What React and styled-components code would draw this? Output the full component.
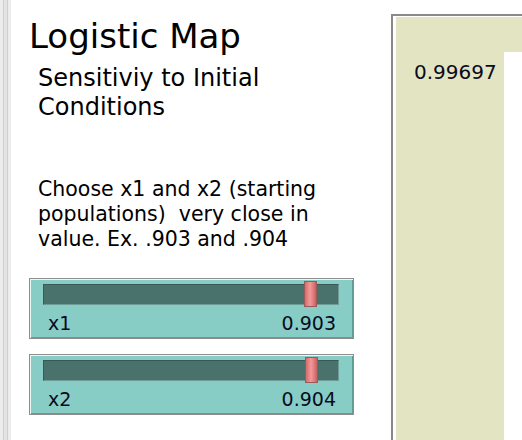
import React from "react";
import styled, { createGlobalStyle } from "styled-components";

const Global = createGlobalStyle`
  html, body {
    margin: 0;
    padding: 0;
    background: #ffffff;
    overflow: hidden;
  }
  body {
    font-family: "DejaVu Sans", Verdana, sans-serif;
    color: #000;
  }
`;

const Page = styled.div`
  display: flex;
  width: 522px;
  height: 440px;
  overflow: hidden;
`;

const Strip = styled.div`
  width: 11px;
  flex: none;
  background: linear-gradient(
    to right,
    #ececec 0 3px,
    #cfcfcf 3px 4px,
    #e4e4e4 4px 7px,
    #cfcfcf 7px 8px,
    #ececec 8px 11px
  );
`;

const Left = styled.div`
  width: 380px;
  flex: none;
  display: flex;
  flex-direction: column;
`;

const Title = styled.h1`
  margin: 16px 0 0 18px;
  font-size: 34px;
  line-height: 40px;
  font-weight: normal;
  white-space: nowrap;
`;

const Subtitle = styled.div`
  margin: 8px 0 0 27px;
  font-size: 24px;
  line-height: 29px;
  width: 250px;
`;

const Note = styled.p`
  margin: 55px 0 0 27px;
  font-size: 20.5px;
  line-height: 25px;
  width: 310px;
  white-space: pre-wrap;
`;

const Sliders = styled.div`
  margin: 26px 0 0 18px;
  display: flex;
  flex-direction: column;
  gap: 15px;
`;

const SliderBox = styled.div`
  box-sizing: border-box;
  width: 325px;
  height: 61px;
  border: 1px solid #8e8e8e;
  background: #87cdc5;
  box-shadow: inset 1px 1px 0 #e9f7f5, inset -1px -1px 0 #5f9c95;
  padding: 5px 14px 0 13px;
`;

const Track = styled.div`
  position: relative;
  height: 21px;
  box-sizing: border-box;
  background: #4a726d;
  border: 1px solid #3a5955;
  border-bottom-color: #6f9c96;
  border-right-color: #6f9c96;
`;

const Thumb = styled.div`
  position: absolute;
  top: -4px;
  width: 13px;
  height: 26px;
  box-sizing: border-box;
  border: 1px solid #9a5a5a;
  background: linear-gradient(to right, #d86a6a, #f09a9a 45%, #e58080 70%, #c86262);
`;

const SliderLabels = styled.div`
  display: flex;
  justify-content: space-between;
  margin: 8px 3px 0 5px;
  font-size: 19px;
  line-height: 20px;
  color: #0a0a20;
`;

const PlotArea = styled.div`
  flex: 1;
  margin-top: 14px;
  border-top: 2px solid #8a8a8a;
  border-left: 2px solid #8a8a8a;
  padding: 1px 0 0 3px;
  display: flex;
`;

const Beige = styled.div`
  flex: 1;
  background: #e3e4c1;
  display: flex;
`;

const Monitor = styled.div`
  width: 108px;
  flex: none;
  box-sizing: border-box;
  padding: 44px 0 0 18px;
  font-size: 20px;
  line-height: 22px;
  color: #0a0a20;
`;

const Canvas = styled.div`
  flex: 1;
  margin-top: 35px;
  background: #ffffff;
`;

const sliders = [
  { name: "x1", value: 0.903 },
  { name: "x2", value: 0.904 },
];

function Slider({ name, value }) {
  const min = 0;
  const max = 0.975;
  const frac = (value - min) / (max - min);
  return (
    <SliderBox>
      <Track>
        <Thumb style={{ left: `calc(${frac * 100}% - ${frac * 13}px)` }} />
      </Track>
      <SliderLabels>
        <span>{name}</span>
        <span>{value.toFixed(3)}</span>
      </SliderLabels>
    </SliderBox>
  );
}

export default function App() {
  return (
    <Page>
      <Global />
      <Strip />
      <Left>
        <Title>Logistic Map</Title>
        <Subtitle>Sensitiviy to Initial Conditions</Subtitle>
        <Note>
          {"Choose x1 and x2 (starting\npopulations)  very close in\nvalue. Ex. .903 and .904"}
        </Note>
        <Sliders>
          {sliders.map((s) => (
            <Slider key={s.name} name={s.name} value={s.value} />
          ))}
        </Sliders>
      </Left>
      <PlotArea>
        <Beige>
          <Monitor>0.99697</Monitor>
          <Canvas />
        </Beige>
      </PlotArea>
    </Page>
  );
}
